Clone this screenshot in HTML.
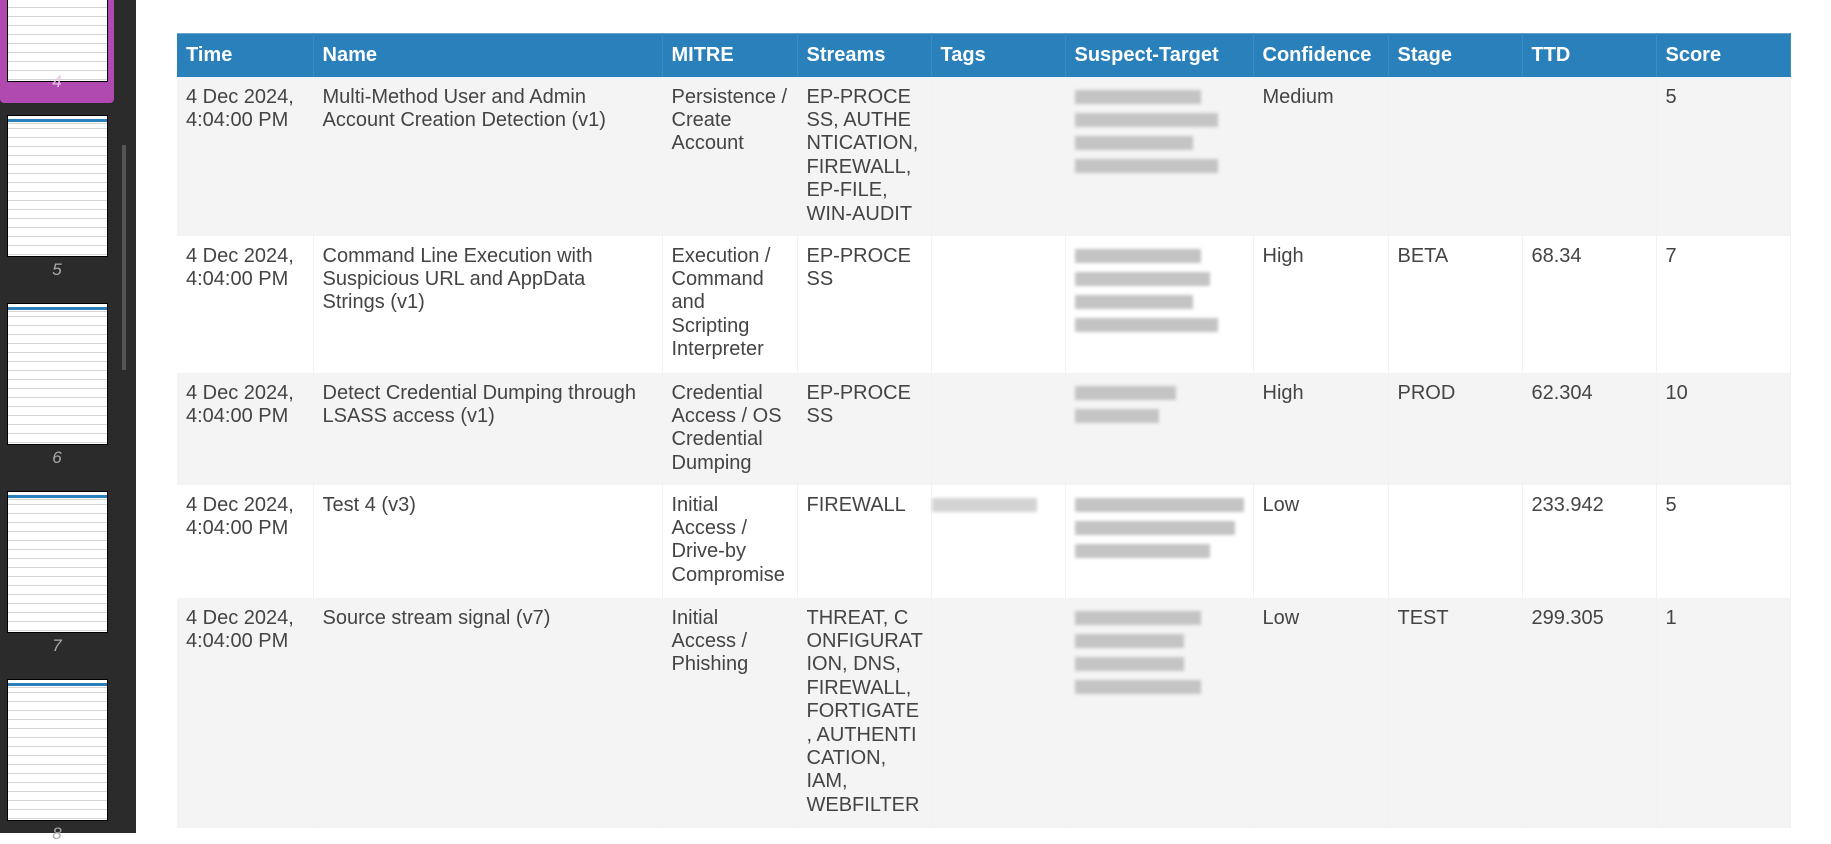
<!DOCTYPE html>
<html><head><meta charset="utf-8"><style>
*{margin:0;padding:0;box-sizing:border-box}
body{width:1831px;height:833px;overflow:hidden;background:#fff;font-family:"Liberation Sans",sans-serif;position:relative}
#side{position:absolute;left:0;top:0;width:136px;height:833px;background:#2b2b2b}
#sel{position:absolute;left:0;top:-10px;width:114px;height:113px;background:#b04ab0;border-radius:0 0 4px 4px}
.th{position:absolute;left:7px;width:101px;height:142px;background:#fff;border:1px solid #000;
background-image:linear-gradient(#2a80ba,#2a80ba),repeating-linear-gradient(#fff 0 4px,#d4d4d4 4px 5px,#fff 5px 9px);
background-size:100% 3px,100% 100%;background-repeat:no-repeat,repeat;background-position:0 3px,0 8px}
.lb{position:absolute;left:0;width:114px;text-align:center;color:#aaa;font-style:italic;font-size:17px;z-index:2}
#sb{position:absolute;left:122px;top:145px;width:4px;height:225px;background:#555}
table{position:absolute;left:177px;top:33px;width:1613px;border-collapse:collapse;table-layout:fixed;font-size:20px;color:#444}
th{background:#2a80ba;color:#fff;text-align:left;font-weight:bold;height:43px;padding:0 9px;border-right:1px solid #3a8cc4;border-top:1px solid #6aa5cc}
td{vertical-align:top;padding:9px 9px 0;line-height:23.4px;border-right:1px solid #f2f2f2;overflow-wrap:anywhere}
td.s{white-space:nowrap;overflow:visible}
tr.o td{background:#f4f4f4}
.bl{filter:blur(1.5px)}
.bl div{height:14px;background:#c4c4c4;margin:4px 0 9px}
</style></head><body>
<div id="side">
<div id="sel"></div>
<div class="th" style="top:-60px"></div>
<div class="lb" style="top:72px;color:#e8c8e8">4</div>
<div class="th" style="top:115px"></div><div class="lb" style="top:260px">5</div>
<div class="th" style="top:303px"></div><div class="lb" style="top:448px">6</div>
<div class="th" style="top:491px"></div><div class="lb" style="top:636px">7</div>
<div class="th" style="top:679px"></div><div class="lb" style="top:824px">8</div>
<div id="sb"></div>
</div>
<table>
<colgroup><col style="width:136px"><col style="width:349px"><col style="width:135px"><col style="width:134px"><col style="width:134px"><col style="width:188px"><col style="width:135px"><col style="width:134px"><col style="width:134px"><col style="width:134px"></colgroup>
<tr><th>Time</th><th>Name</th><th>MITRE</th><th>Streams</th><th>Tags</th><th>Suspect-Target</th><th>Confidence</th><th>Stage</th><th>TTD</th><th>Score</th></tr>
<tr class="o" style="height:159px"><td>4 Dec 2024, 4:04:00 PM</td><td>Multi-Method User and Admin Account Creation Detection (v1)</td><td>Persistence / Create Account</td><td class="s">EP-PROCE<br>SS, AUTHE<br>NTICATION,<br>FIREWALL,<br>EP-FILE,<br>WIN-AUDIT</td><td></td><td><div class="bl"><div style="width:75%"></div><div style="width:85%"></div><div style="width:70%"></div><div style="width:85%"></div></div></td><td>Medium</td><td></td><td></td><td>5</td></tr>
<tr style="height:137px"><td>4 Dec 2024, 4:04:00 PM</td><td>Command Line Execution with Suspicious URL and AppData<br>Strings (v1)</td><td>Execution /<br>Command<br>and<br>Scripting<br>Interpreter</td><td class="s">EP-PROCE<br>SS</td><td></td><td><div class="bl"><div style="width:75%"></div><div style="width:80%"></div><div style="width:70%"></div><div style="width:85%"></div></div></td><td>High</td><td>BETA</td><td>68.34</td><td>7</td></tr>
<tr class="o" style="height:112px"><td>4 Dec 2024, 4:04:00 PM</td><td>Detect Credential Dumping through LSASS access (v1)</td><td>Credential<br>Access / OS<br>Credential<br>Dumping</td><td class="s">EP-PROCE<br>SS</td><td></td><td><div class="bl"><div style="width:60%"></div><div style="width:50%"></div></div></td><td>High</td><td>PROD</td><td>62.304</td><td>10</td></tr>
<tr style="height:113px"><td>4 Dec 2024, 4:04:00 PM</td><td>Test 4 (v3)</td><td>Initial<br>Access /<br>Drive-by<br>Compromise</td><td class="s">FIREWALL</td><td style="padding-left:0"><div class="bl"><div style="width:85%;background:#d4d4d4"></div></div></td><td><div class="bl"><div style="width:100%"></div><div style="width:95%"></div><div style="width:80%"></div></div></td><td>Low</td><td></td><td>233.942</td><td>5</td></tr>
<tr class="o" style="height:230px"><td>4 Dec 2024, 4:04:00 PM</td><td>Source stream signal (v7)</td><td>Initial<br>Access /<br>Phishing</td><td class="s">THREAT, C<br>ONFIGURAT<br>ION, DNS,<br>FIREWALL,<br>FORTIGATE<br>, AUTHENTI<br>CATION,<br>IAM,<br>WEBFILTER</td><td></td><td><div class="bl"><div style="width:75%"></div><div style="width:65%"></div><div style="width:65%"></div><div style="width:75%"></div></div></td><td>Low</td><td>TEST</td><td>299.305</td><td>1</td></tr>
</table>
</body></html>
